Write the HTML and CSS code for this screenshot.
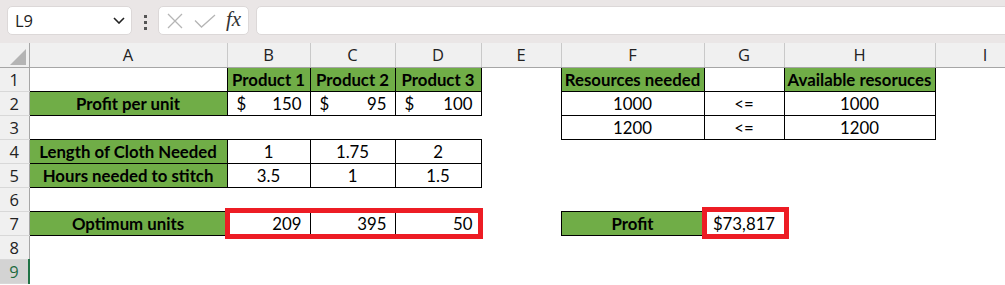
FILE: index.html
```html
<!DOCTYPE html>
<html lang="en">
<head>
    <meta charset="UTF-8">
    <meta name="viewport" content="width=device-width, initial-scale=1.0">
    <title>Clothing Production Solver</title>
    <link rel="stylesheet" href="styles.css">
</head>
<body>
    <div class="toolbar">
        <div class="namebox">
            <span>L9</span>
            <svg class="chevron" width="12" height="7" viewBox="0 0 12 7"><path d="M1 1 L6 6 L11 1" fill="none" stroke="#222" stroke-width="1.6"/></svg>
        </div>
        <div class="grip"><i></i><i></i><i></i></div>
        <div class="fx-buttons">
            <svg width="16" height="16" viewBox="0 0 16 16"><path d="M1 1 L15 15 M15 1 L1 15" stroke="#b5b5b5" stroke-width="1.3" fill="none"/></svg>
            <svg width="22" height="14" viewBox="0 0 22 14"><path d="M1 6.5 L7.5 13 L21 1" stroke="#b5b5b5" stroke-width="1.3" fill="none"/></svg>
            <span class="fx">fx</span>
        </div>
        <div class="formula"></div>
    </div>

    <div class="sheet">
        <table class="grid">
            <colgroup>
                <col style="width:29px">
                <col style="width:198px">
                <col style="width:83px">
                <col style="width:85px">
                <col style="width:86px">
                <col style="width:80px">
                <col style="width:143px">
                <col style="width:80px">
                <col style="width:151px">
                <col style="width:100px">
            </colgroup>
            <tr class="colhead">
                <th class="corner"><svg width="16" height="16" viewBox="0 0 16 16"><path d="M16 0 L16 16 L0 16 Z" fill="#b4b4b4"/></svg></th>
                <th>A</th><th>B</th><th>C</th><th>D</th><th>E</th><th>F</th><th>G</th><th>H</th><th>I</th>
            </tr>
            <tr>
                <th>1</th>
                <td></td>
                <td class="b g">Product 1</td>
                <td class="b g">Product 2</td>
                <td class="b g">Product 3</td>
                <td></td>
                <td class="b g">Resources needed</td>
                <td class="b"></td>
                <td class="b g">Available resoruces</td>
                <td></td>
            </tr>
            <tr>
                <th>2</th>
                <td class="b g">Profit per unit</td>
                <td class="b"><div class="money"><span>$</span><span>150</span></div></td>
                <td class="b"><div class="money"><span>$</span><span>95</span></div></td>
                <td class="b"><div class="money"><span>$</span><span>100</span></div></td>
                <td></td>
                <td class="b c">1000</td>
                <td class="b c">&lt;=</td>
                <td class="b c">1000</td>
                <td></td>
            </tr>
            <tr>
                <th>3</th>
                <td></td><td></td><td></td><td></td><td></td>
                <td class="b c">1200</td>
                <td class="b c">&lt;=</td>
                <td class="b c">1200</td>
                <td></td>
            </tr>
            <tr>
                <th>4</th>
                <td class="b g">Length of Cloth Needed</td>
                <td class="b c">1</td>
                <td class="b c">1.75</td>
                <td class="b c">2</td>
                <td></td><td></td><td></td><td></td><td></td>
            </tr>
            <tr>
                <th>5</th>
                <td class="b g">Hours needed to stitch</td>
                <td class="b c">3.5</td>
                <td class="b c">1</td>
                <td class="b c">1.5</td>
                <td></td><td></td><td></td><td></td><td></td>
            </tr>
            <tr>
                <th>6</th>
                <td></td><td></td><td></td><td></td><td></td><td></td><td></td><td></td><td></td>
            </tr>
            <tr>
                <th>7</th>
                <td class="b g">Optimum units</td>
                <td class="b r">209</td>
                <td class="b r">395</td>
                <td class="b r">50</td>
                <td></td>
                <td class="b g">Profit</td>
                <td class="b c">$73,817</td>
                <td></td><td></td>
            </tr>
            <tr>
                <th>8</th>
                <td></td><td></td><td></td><td></td><td></td><td></td><td></td><td></td><td></td>
            </tr>
            <tr>
                <th class="active">9</th>
                <td></td><td></td><td></td><td></td><td></td><td></td><td></td><td></td><td></td>
            </tr>
        </table>
        <div class="mark mark-units"></div>
        <div class="mark mark-profit"></div>
    </div>
</body>
</html>
```

FILE: styles.css
```css
body {
    margin: 0;
    width: 1005px;
    height: 285px;
    overflow: hidden;
    background-color: #fff;
    font-family: "Open Sans", sans-serif;
}
.toolbar {
    display: flex;
    align-items: flex-start;
    height: 43px;
    padding: 6px 0 0 7px;
    box-sizing: border-box;
    background-color: #eae6e6;
}
.namebox {
    display: flex;
    align-items: center;
    justify-content: space-between;
    width: 125px;
    height: 29px;
    padding: 0 6px 0 7px;
    box-sizing: border-box;
    background-color: #fff;
    border: 1px solid #dcd8d8;
    border-radius: 5px;
    font-size: 16.5px;
    color: #222;
}
.grip {
    display: flex;
    flex-direction: column;
    align-items: center;
    gap: 3px;
    width: 26px;
    padding-top: 9px;
}
.grip i {
    display: block;
    width: 3px;
    height: 3px;
    background-color: #555;
}
.fx-buttons {
    display: flex;
    align-items: center;
    gap: 11px;
    width: 91px;
    height: 29px;
    padding-left: 8px;
    box-sizing: border-box;
    background-color: #fff;
    border: 1px solid #dcd8d8;
    border-radius: 5px;
}
.fx {
    font-family: "Liberation Serif", serif;
    font-style: italic;
    font-size: 21px;
    color: #333;
    line-height: 1;
    margin-left: -1px;
    margin-top: -3px;
}
.formula {
    flex: 1;
    height: 29px;
    margin-left: 7px;
    margin-right: -8px;
    box-sizing: border-box;
    background-color: #fff;
    border: 1px solid #dcd8d8;
    border-radius: 5px;
}
.sheet {
    position: relative;
}
.grid {
    border-collapse: collapse;
    table-layout: fixed;
    width: 1035px;
}
.grid tr {
    height: 24px;
}
.grid th {
    padding: 0;
    font-weight: normal;
    font-size: 16.5px;
    line-height: 23px;
    color: #222;
    background-color: #f0f0f0;
    border-right: 1px solid #a6a6a6;
    border-bottom: 1px solid #d8d8d8;
    text-align: center;
}
.grid .colhead th {
    border-right: 1px solid #c9c9c9;
    border-bottom: 1px solid #a6a6a6;
}
.grid .colhead th.corner {
    border-right: 1px solid #a6a6a6;
    text-align: right;
    vertical-align: bottom;
    padding: 0 3px 2px 0;
}
.corner svg {
    display: block;
    margin-left: auto;
}
.grid th.active {
    background-color: #d3d3d3;
    color: #1e6b3f;
    border-right: 2px solid #217346;
}
.grid td {
    padding: 0 8px 1px 8px;
    font-family: Lato, sans-serif;
    font-size: 16.8px;
    line-height: 20px;
    color: #000;
    vertical-align: bottom;
    white-space: nowrap;
    overflow: hidden;
}
.grid td.b {
    border: 1px solid #000;
}
.grid td.g {
    background-color: #70ad47;
    font-weight: bold;
    text-align: center;
    padding: 0 0 1px 0;
}
.grid td.c {
    text-align: center;
}
.grid td.r {
    text-align: right;
}
.money {
    display: flex;
    justify-content: space-between;
    padding-left: 1px;
}
.mark {
    position: absolute;
    box-sizing: border-box;
    border: 5px solid #ed1c24;
}
.mark-units {
    left: 225px;
    top: 165px;
    width: 258px;
    height: 31px;
}
.mark-profit {
    left: 702px;
    top: 164px;
    width: 87px;
    height: 32px;
}
```
